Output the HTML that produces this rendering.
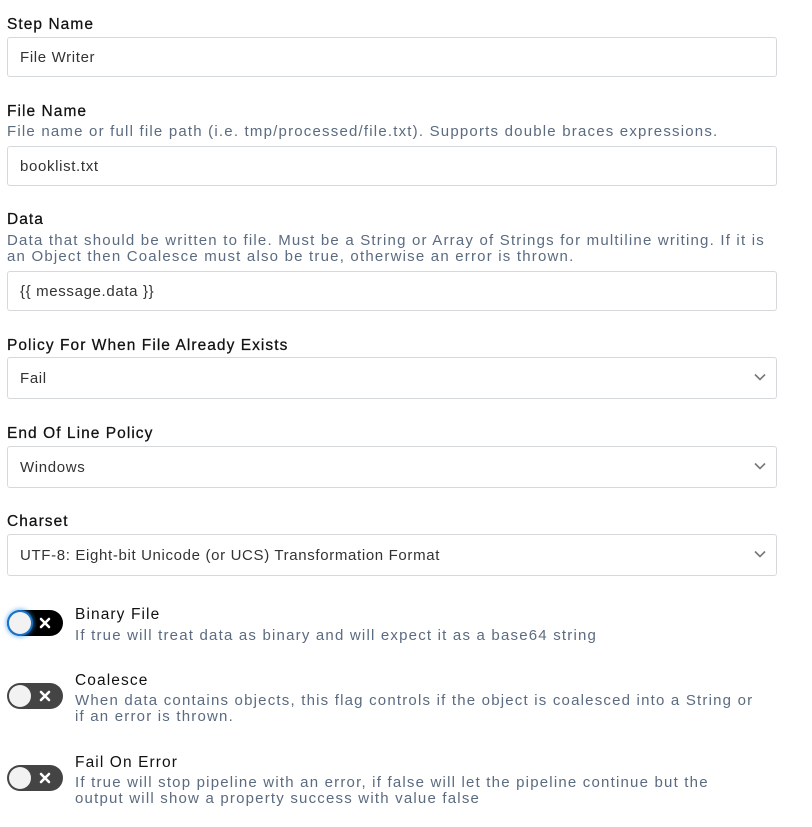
<!DOCTYPE html>
<html><head><style>
body{margin:0;background:#fff;font-family:"Liberation Sans",sans-serif;}
.a{position:absolute;white-space:nowrap}
.l{left:7px;font-size:15.5px;color:#111;letter-spacing:1.05px;-webkit-text-stroke:0.25px #111}
.d{left:7px;font-size:15px;color:#5b6b80;letter-spacing:1.2px;line-height:16px}
.i{position:absolute;left:7px;width:770px;border:1px solid #d6d9dc;border-radius:3px;box-sizing:border-box;font-size:15px;color:#333;padding-left:12px;letter-spacing:0.65px}
.chev{position:absolute;right:10px;top:50%;margin-top:-5px}
.t{position:absolute;left:7px;width:56px;height:26px;border-radius:13px;background:#444}
.t .k{position:absolute;left:2px;top:2px;width:22px;height:22px;border-radius:50%;background:#f2f2f2}
.t .x{position:absolute;left:32px;top:7px}
.tt{left:75px;font-size:15.5px;color:#111;letter-spacing:1.1px}
.td{left:75px;font-size:15px;color:#5b6b80;letter-spacing:1.2px;line-height:16px}
</style></head><body>
<div class="a l" style="top:16px">Step Name</div>
<div class="i" style="top:37px;height:40px;line-height:40px">File Writer</div>
<div class="a l" style="top:103px">File Name</div>
<div class="a d" style="top:124px">File name or full file path (i.e. tmp/processed/file.txt). Supports double braces expressions.</div>
<div class="i" style="top:146px;height:40px;line-height:40px">booklist.txt</div>
<div class="a l" style="top:211px">Data</div>
<div class="a d" style="top:233px">Data that should be written to file. Must be a String or Array of Strings for multiline writing. If it is<br>an Object then Coalesce must also be true, otherwise an error is thrown.</div>
<div class="i" style="top:271px;height:40px;line-height:40px">{{ message.data }}</div>
<div class="a l" style="top:337px">Policy For When File Already Exists</div>
<div class="i" style="top:357px;height:42px;line-height:42px">Fail<svg class="chev" width="12" height="8" viewBox="0 0 12 8"><path d="M1 1.5L6 6.5L11 1.5" fill="none" stroke="#777" stroke-width="1.6"/></svg></div>
<div class="a l" style="top:425px">End Of Line Policy</div>
<div class="i" style="top:446px;height:42px;line-height:42px">Windows<svg class="chev" width="12" height="8" viewBox="0 0 12 8"><path d="M1 1.5L6 6.5L11 1.5" fill="none" stroke="#777" stroke-width="1.6"/></svg></div>
<div class="a l" style="top:513px">Charset</div>
<div class="i" style="top:534px;height:42px;line-height:42px">UTF-8: Eight-bit Unicode (or UCS) Transformation Format<svg class="chev" width="12" height="8" viewBox="0 0 12 8"><path d="M1 1.5L6 6.5L11 1.5" fill="none" stroke="#777" stroke-width="1.6"/></svg></div>

<div class="t" style="top:610px;background:#000"><div class="k" style="box-shadow:0 0 0 2px #1a73c8,0 0 4px 3px rgba(40,150,240,0.6)"></div><svg class="x" width="12" height="12" viewBox="0 0 12 12"><path d="M2 2L10 10M10 2L2 10" stroke="#fff" stroke-width="2.6" stroke-linecap="round"/></svg></div>
<div class="a tt" style="top:606px">Binary File</div>
<div class="a td" style="top:628px">If true will treat data as binary and will expect it as a base64 string</div>

<div class="t" style="top:683px"><div class="k"></div><svg class="x" width="12" height="12" viewBox="0 0 12 12"><path d="M2 2L10 10M10 2L2 10" stroke="#fff" stroke-width="2.6" stroke-linecap="round"/></svg></div>
<div class="a tt" style="top:672px">Coalesce</div>
<div class="a td" style="top:693px">When data contains objects, this flag controls if the object is coalesced into a String or<br>if an error is thrown.</div>

<div class="t" style="top:765px"><div class="k"></div><svg class="x" width="12" height="12" viewBox="0 0 12 12"><path d="M2 2L10 10M10 2L2 10" stroke="#fff" stroke-width="2.6" stroke-linecap="round"/></svg></div>
<div class="a tt" style="top:754px">Fail On Error</div>
<div class="a td" style="top:775px">If true will stop pipeline with an error, if false will let the pipeline continue but the<br>output will show a property success with value false</div>
</body></html>
